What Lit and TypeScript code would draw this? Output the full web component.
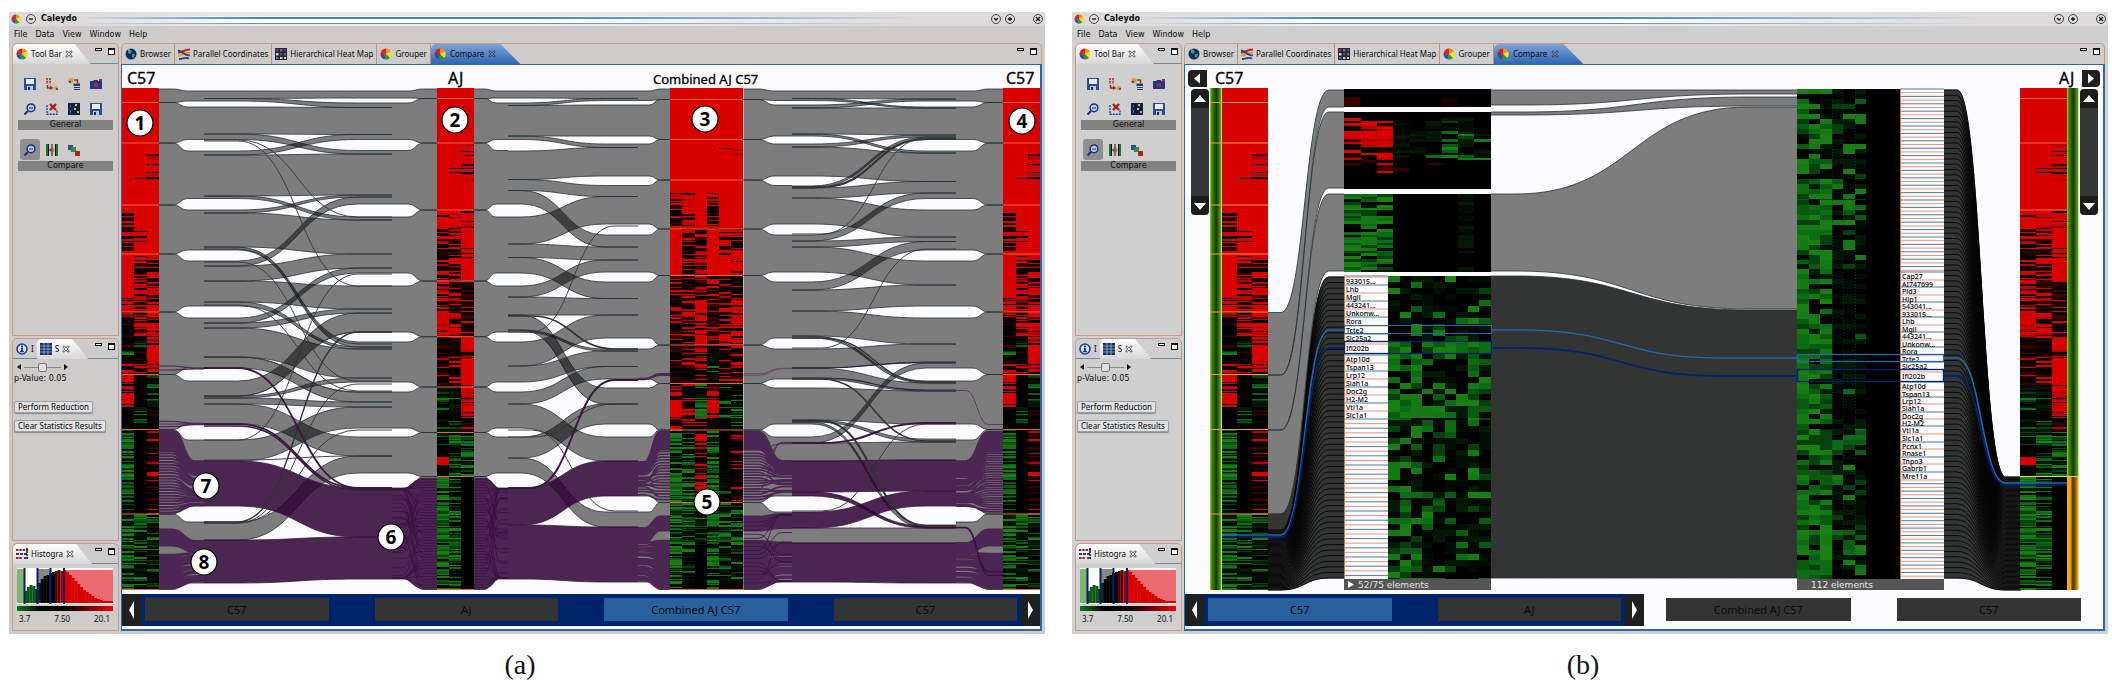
import { LitElement, html, svg, css } from "lit";
import { customElement, property } from "lit/decorators.js";
import { classMap } from "lit/directives/class-map.js";

type Span = [number, number];
type Link = [number, number, number, number, string?];
type Seg = [number, number, string[]];

/* ---------- drawing helpers ---------- */

function rng(seed: number) {
  let s = seed;
  return () => {
    s = (s * 1664525 + 1013904223) % 4294967296;
    return s / 4294967296;
  };
}

const REDS = ["#d90000", "#d90000", "#b80000", "#d90000"];
const DARK_REDS = ["#3a0000", "#160000", "#000", "#000", "#000"];
const GREENS = ["#0b5a12", "#0b6e14", "#1a7f12", "#06400c", "#157a14"];
const DARK_GREENS = ["#021a04", "#000", "#000", "#010c02"];

/* A cell code is a hue letter and the share of bright cells: "r80", "g40", "k0". */
function heat(x: number, widths: number[], segs: Seg[], seed: number, rowHeight = 1.34) {
  const rand = rng(seed);
  const paths = new Map<string, string>();
  const put = (c: string, d: string) => paths.set(c, (paths.get(c) ?? "") + d);
  const total = widths.reduce((a, b) => a + b, 0);
  const y0 = segs[0][0];
  const y1 = segs[segs.length - 1][1];
  for (const [a, b, cols] of segs) {
    let cx = x;
    cols.forEach((code, i) => {
      const w = widths[i];
      const hue = code[0];
      const share = Number(code.slice(1)) / 100;
      if (share === 1 && hue === "r") {
        put("#d90000", `M${cx} ${a}h${w}V${b}h${-w}z`);
      } else if (hue !== "k") {
        for (let y = a; y < b; y += rowHeight) {
          const h = Math.min(rowHeight, b - y);
          const bright = rand() < share;
          const set = hue === "r" ? (bright ? (share > 0.9 ? REDS.slice(0, 1) : REDS) : DARK_REDS) : bright ? GREENS : DARK_GREENS;
          const c = set[Math.floor(rand() * set.length)];
          if (c !== "#000") put(c, `M${cx} ${y.toFixed(1)}h${w}v${h.toFixed(1)}h${-w}z`);
        }
      }
      cx += w;
    });
  }
  return svg`<g shape-rendering="crispEdges">
    <rect x=${x} y=${y0} width=${total} height=${y1 - y0} fill="#000"></rect>
    ${[...paths].map(([c, d]) => svg`<path fill=${c} d=${d}></path>`)}
  </g>`;
}

function rules(x0: number, x1: number, ys: number[], colour = "#e8663a") {
  return svg`<path d=${ys.map((y) => `M${x0} ${y}H${x1}`).join("")} stroke=${colour} fill="none"></path>`;
}

function bandPath(x0: number, x1: number, l: Span, r: Span, a: number, b: number) {
  const p = x0 + (x1 - x0) * a;
  const q = x0 + (x1 - x0) * b;
  const m = (p + q) / 2;
  return {
    top: `M${x0} ${l[0]}H${p}C${m} ${l[0]} ${m} ${r[0]} ${q} ${r[0]}H${x1}`,
    fill: `M${x0} ${l[0]}H${p}C${m} ${l[0]} ${m} ${r[0]} ${q} ${r[0]}H${x1}V${r[1]}H${q}C${m} ${r[1]} ${m} ${l[1]} ${p} ${l[1]}H${x0}z`,
    bottom: `M${x0} ${l[1]}H${p}C${m} ${l[1]} ${m} ${r[1]} ${q} ${r[1]}H${x1}`,
  };
}

const FILLS: Record<string, string> = {
  grey: "rgba(0,0,0,.5)",
  purple: "rgba(43,0,49,.85)",
  dark: "#333434",
};

function band(x0: number, x1: number, l: Span, r: Span, a = 0.18, b = 0.82, kind = "grey") {
  const p = bandPath(x0, x1, l, r, a, b);
  const line = kind === "purple" ? "#3a1640" : "#25323a";
  return svg`<path d=${p.fill} fill=${FILLS[kind]}></path>
    <path d=${p.top + p.bottom} fill="none" stroke=${line} stroke-width=".8"></path>`;
}

function spans(edges: number[]): Span[] {
  const out: Span[] = [];
  for (let i = 0; i < edges.length; i += 2) out.push([edges[i], edges[i + 1]]);
  return out;
}

function columnSpans(div: number[]): Span[] {
  return div.slice(1).map((y, i) => [div[i], y] as Span);
}

/* Many thin strands between two vertical ranges; mix shuffles their order. */
function strands(x0: number, x1: number, l: Span, r: Span, n: number, mix: number, seed: number, colour = "#4d2753", width = 1.4) {
  const rand = rng(seed);
  let d = "";
  for (let i = 0; i < n; i++) {
    const t = (i + 0.5) / n;
    const u = Math.min(1, Math.max(0, t + (rand() - 0.5) * mix));
    const ya = l[0] + (l[1] - l[0]) * t;
    const yb = r[0] + (r[1] - r[0]) * u;
    const p = x0 + (x1 - x0) * 0.3;
    const q = x0 + (x1 - x0) * 0.8;
    const m = (p + q) / 2;
    d += `M${x0} ${ya.toFixed(1)}H${p.toFixed(1)}C${m.toFixed(1)} ${ya.toFixed(1)} ${m.toFixed(1)} ${yb.toFixed(1)} ${q.toFixed(1)} ${yb.toFixed(1)}H${x1}`;
  }
  return svg`<path d=${d} fill="none" stroke=${colour} stroke-width=${width}></path>`;
}

function thin(x0: number, x1: number, list: [number, number, number?, string?][]) {
  return list.map(([a, b, w, c]) => svg`<path fill="none" stroke=${c ?? "#333"} stroke-width=${w ?? 0.9}
    d=${bandPath(x0, x1, [a, a], [b, b], 0.18, 0.82).top}></path>`);
}

/* ---------- overview data ---------- */

const DIV_C57 = [89, 102.5, 143, 205, 254, 312, 374.5, 429.5, 514, 589.5];
const DIV_AJ = [89, 98.5, 143, 210, 281, 336.7, 387, 432.5, 476.5, 589.5];
const DIV_MIX = [89, 99.5, 139.5, 180, 229, 275.5, 345, 383.5, 430, 502.5, 589.5];

const EDGE_C57 = spans([91, 101, 107, 139.5, 151, 198.5, 210, 250, 261, 306, 318, 368, 381, 424, 440, 506, 522, 583]);
const EDGE_AJ = spans([91, 98, 103, 139.5, 150.5, 204, 217, 273, 286, 332, 342, 382, 392, 428, 437, 473, 488, 579]);
const EDGE_MIX = spans([91, 100.5, 105, 136, 144, 176, 185.5, 224, 235, 272, 282, 338, 349, 379, 388, 424, 437, 496, 512, 582]);

const LINKS_1: Link[] = [
  [91, 98.5, 91, 98], [98.5, 101, 103, 107.5], [107, 134, 107.5, 134.5], [134, 139.5, 150.5, 154],
  [151, 155, 134.5, 139.5], [155, 196, 154, 195], [196, 198.5, 217, 220], [210, 213, 195, 197],
  [213, 247, 220, 254], [247, 250, 342, 347], [261, 266, 197, 204], [266, 281, 254, 268],
  [281, 302, 286, 309], [302, 306, 347, 349], [318, 323, 268, 273], [323, 328, 309, 313],
  [328, 357, 349, 378], [357, 368, 392, 402], [381, 396, 313, 332], [396, 398, 378, 382],
  [398, 404, 402, 407], [404, 424, 437, 456], [440, 461, 407, 428], [522, 540, 456, 473],
  [461, 506, 488, 537, "purple"], [540, 583, 537, 579, "purple"],
];
const LINKS_2: Link[] = [
  [91, 98, 91, 98.5], [103, 105.5, 98.5, 100.5], [105.5, 136, 105, 136], [136, 139.5, 144, 147.5],
  [151, 179.5, 147.5, 176], [179.5, 190.5, 185.5, 196.5], [190.5, 204, 235, 247], [217, 244, 196.5, 224],
  [244, 257.5, 247, 260], [257.5, 273, 282, 298.5], [286, 297, 260, 272], [297, 315, 298.5, 315],
  [315, 330, 388, 404], [330, 332, 349, 351], [342, 366, 315, 338], [366, 382, 351, 366.5],
  [392, 404, 366.5, 379], [404, 428, 437, 461], [437, 458, 404, 424], [458, 473, 512, 527],
  [488, 525, 461, 496, "purple"], [525, 579, 527, 582, "purple"],
];
const LINKS_3: Link[] = [
  [91, 98.5, 91, 99], [105, 108, 99, 101], [98.5, 100.5, 107, 108], [108, 134, 108, 135], [134, 136, 151, 153],
  [144, 147, 135, 137], [147, 176, 153, 181.5], [186, 188, 137, 139.5], [188, 198, 181.5, 193],
  [198, 224, 210, 237], [235, 241, 193, 198.5], [241, 247, 237, 241.5], [247, 272, 261, 285],
  [282, 290, 241.5, 250], [290, 311, 285, 306], [311, 336, 318, 344], [336, 338, 381, 383],
  [349, 368, 344, 363], [368, 379, 383, 391], [388, 420, 391, 424], [437, 443, 363, 368],
  [420, 422, 439, 442], [422, 424, 525, 528], [443, 461, 442, 460], [528, 543, 528, 543],
  [461, 492, 460, 491, "purple"], [512, 528, 491, 506, "purple"], [492, 496, 526, 528, "purple"],
  [543, 582, 543, 583, "purple"],
];

const SEG_C57: Seg[] = [
  [88, 143, ["r100", "r100", "r100"]], [143, 153, ["r100", "r100", "r100"]], [153, 180, ["r100", "r99", "r78"]],
  [180, 212, ["r100", "r100", "r100"]], [212, 252, ["r40", "r98", "r100"]], [252, 256, ["r100", "r100", "r100"]],
  [256, 275, ["r92", "r40", "r35"]], [275, 312, ["r93", "r60", "r75"]], [312, 336, ["r12", "r50", "r80"]],
  [336, 348, ["r5", "g15", "r40"]], [348, 361, ["g10", "r20", "r97"]], [361, 375, ["r20", "r50", "r60"]],
  [375, 388, ["r45", "k0", "g35"]], [388, 407, ["r92", "k0", "g40"]], [407, 430, ["k0", "g8", "r5"]],
  [430, 514, ["g55", "k0", "r15"]], [514, 525, ["g20", "g90", "g85"]], [525, 589.5, ["g50", "g28", "g28"]],
];
const SEG_AJ: Seg[] = [
  [88, 143, ["r100", "r100", "r100"]], [143, 182, ["r100", "r98", "r78"]], [182, 210, ["r100", "r100", "r100"]],
  [210, 228, ["r98", "r85", "r60"]], [228, 275, ["r35", "r45", "r97"]], [275, 281, ["r10", "r20", "r100"]],
  [281, 337, ["r80", "r40", "r5"]], [337, 360, ["r12", "r15", "r80"]], [360, 387, ["r10", "r15", "r92"]],
  [387, 418, ["g30", "g12", "r75"]], [418, 432, ["g20", "g20", "r8"]], [432, 445, ["g10", "g90", "g85"]],
  [445, 457, ["k0", "g30", "g60"]], [457, 465, ["r95", "g35", "g50"]], [465, 476, ["k0", "g30", "g30"]],
  [476, 530, ["g92", "g45", "k0"]], [530, 550, ["g92", "g70", "k0"]], [550, 589.5, ["g85", "g40", "k0"]],
];
const SEG_MIX: Seg[] = [
  [88, 148, ["r100", "r100", "r100", "r100", "r100", "r100"]],
  [148, 158, ["r100", "r98", "r92", "r100", "r92", "r85"]],
  [158, 190, ["r100", "r100", "r100", "r100", "r100", "r100"]],
  [190, 229, ["r45", "r80", "r100", "r40", "r100", "r100"]],
  [229, 250, ["r100", "r60", "r35", "r100", "r45", "r40"]],
  [250, 275, ["r100", "r50", "r50", "r100", "r92", "r94"]],
  [275, 300, ["r55", "r35", "r50", "r60", "r20", "r25"]],
  [300, 345, ["r20", "r35", "r92", "r25", "r50", "r80"]],
  [345, 383, ["r5", "r10", "r45", "g10", "r15", "r40"]],
  [383, 400, ["r50", "r25", "g30", "r45", "g12", "g30"]],
  [400, 418, ["r92", "r35", "g80", "r85", "g25", "g40"]],
  [418, 430, ["r30", "r10", "r25", "k0", "k0", "g30"]],
  [430, 470, ["g65", "g40", "r35", "g60", "k0", "r20"]],
  [470, 502, ["g85", "g60", "r30", "g70", "g5", "r15"]],
  [502, 545, ["g70", "g50", "g35", "g65", "g50", "g50"]],
  [545, 589.5, ["g75", "g25", "k0", "g50", "g12", "g20"]],
];

const MARKS: [number, number, number][] = [
  [1, 140, 123], [2, 455, 120], [3, 705, 119], [4, 1022, 121],
  [5, 707, 502], [6, 391, 537], [7, 206, 486], [8, 204, 562],
];

function fans(xc: number, xe: number, col: Span[], edge: Span[]) {
  const flip = xe < xc;
  return col.map((c, i) => flip
    ? band(xe, xc, edge[i], c, 0.35, 0.7)
    : band(xc, xe, c, edge[i], 0.3, 0.65));
}

function overview() {
  const c57 = columnSpans(DIV_C57);
  const aj = columnSpans(DIV_AJ);
  const mix = columnSpans(DIV_MIX);
  return svg`
    <g>
      ${fans(159, 204, c57, EDGE_C57)}
      ${LINKS_1.map((l) => band(204, 392, [l[0], l[1]], [l[2], l[3]], 0.18, 0.82, l[4]))}
      ${fans(437, 392, aj, EDGE_AJ)}
      ${thin(204, 392, [[140, 217], [141, 286], [249, 344], [262, 381], [440, 274], [522, 332, 1.4], [523, 384], [523, 430],
        [396, 332], [357, 392], [305, 391], [460, 456], [368, 488, 1.8, "#3a1640"], [424, 488, 2, "#3a1640"], [426, 490, 1.4, "#3a1640"]])}
      ${strands(159, 204, [364, 372], [368, 369], 2, 0, 4, "#4d2753", 1.2)}
      ${strands(159, 204, [420, 428], [423, 425], 3, 0, 5, "#4d2753", 1.2)}
      ${strands(159, 204, [430, 452], [461, 475], 16, 0.1, 6, "#4d2753", 1.8)}
      ${strands(159, 204, [452, 514], [475, 506], 22, 0.1, 7, "#4d2753", 2)}
      ${strands(159, 204, [529, 546], [541, 553], 16, 0.1, 8, "#4d2753", 2)}
      ${strands(159, 204, [554, 589], [553, 583], 26, 0.1, 9, "#4d2753", 2)}
      ${strands(437, 392, [478, 589], [489, 578], 64, 0, 10, "#4d2753", 2.2)}
      ${strands(437, 392, [478, 589], [489, 578], 40, 1.5, 11, "#3a1040", 0.8)}
    </g>
    <g>
      ${fans(474, 508, aj, EDGE_AJ)}
      ${LINKS_2.map((l) => band(508, 638, [l[0], l[1]], [l[2], l[3]], 0.1, 0.75, l[4]))}
      ${fans(670, 638, mix, EDGE_MIX)}
      ${thin(508, 638, [[332, 226], [316, 349, 1.6], [430, 511], [488, 380, 2, "#3a1640"], [437, 404]])}
      ${strands(474, 508, [478, 589], [489, 578], 64, 0, 12, "#4d2753", 2.2)}
      ${strands(474, 508, [478, 589], [489, 578], 40, 1.5, 13, "#3a1040", 0.8)}
      ${strands(670, 638, [431, 450], [462, 473], 14, 0.2, 14, "#4d2753", 2)}
      ${strands(670, 638, [450, 501], [470, 495], 18, 0.5, 15, "#4d2753", 1.6)}
      ${strands(670, 638, [516, 531], [528, 543], 16, 0.1, 16, "#4d2753", 2)}
      ${strands(670, 638, [540, 589], [543, 581], 36, 0.1, 17, "#4d2753", 2)}
      ${strands(670, 638, [373, 376], [378, 380], 2, 0, 18)}
    </g>
    <g>
      ${fans(743.5, 792, mix, EDGE_MIX)}
      ${LINKS_3.map((l) => band(792, 956, [l[0], l[1]], [l[2], l[3]], 0.12, 0.82, l[4]))}
      ${fans(1003, 956, c57, EDGE_C57)}
      ${thin(792, 956, [[187, 139, 2], [234, 138], [348, 249], [338, 382, 1.6], [379, 441, 1.6], [421, 526, 2], [511, 424],
        [443, 423, 2, "#3a1640"], [378, 390, 1.2, "#3a1640"], [368, 362, 1.2, "#3a1640"]])}
      ${strands(743.5, 792, [373, 376], [368, 369], 2, 0, 19, "#6a4a70", 1)}
      ${strands(743.5, 792, [431, 450], [461, 473], 14, 0.2, 20, "#4d2753", 2)}
      ${strands(743.5, 792, [452, 501], [470, 492], 18, 0.5, 21, "#4d2753", 1.6)}
      ${strands(743.5, 792, [516, 531], [514, 528], 14, 0.1, 22, "#4d2753", 2)}
      ${strands(743.5, 792, [540, 589], [543, 581], 36, 0.1, 23, "#4d2753", 2)}
      ${strands(743.5, 792, [500, 440], [442, 444], 3, 0, 30, "#4d2753", 1)}
      ${strands(743.5, 792, [520, 585], [515, 581], 16, 1.2, 31, "#3a1040", 0.8)}
      ${strands(1003, 956, [431, 452], [461, 480], 14, 0.1, 24, "#4d2753", 2)}
      ${strands(1003, 956, [452, 513], [480, 506], 26, 0.2, 25, "#4d2753", 1.8)}
      ${strands(1003, 956, [529, 546], [543, 555], 14, 0.1, 26, "#4d2753", 2)}
      ${strands(1003, 956, [553, 589], [553, 583], 26, 0.1, 27, "#4d2753", 2)}
      ${strands(1003, 956, [570, 577], [527, 528], 2, 0, 28, "#3a1040", 1.2)}
      ${strands(1003, 956, [424, 425], [390, 391], 1, 0, 29, "#5a3a60", 1)}
    </g>
    ${heat(122, [12, 13, 12], SEG_C57, 3)}${rules(122, 159, DIV_C57.slice(1))}
    ${heat(437, [12, 12, 13], SEG_AJ, 7)}${rules(437, 474, DIV_AJ.slice(1))}
    ${heat(670, [12, 13, 12, 12, 12, 12], SEG_MIX, 11)}${rules(670, 743, DIV_MIX.slice(1))}
    ${heat(1003, [13, 12, 12], SEG_C57, 3)}${rules(1003, 1040, DIV_C57.slice(1))}
    <g class="heading">
      <text x="127" y="84">C57</text>
      <text x="448" y="84">AJ</text>
      <text class="small" x="653" y="84">Combined AJ C57</text>
      <text x="1006" y="84">C57</text>
    </g>
    ${MARKS.map(([n, x, y]) => svg`<circle cx=${x} cy=${y} r="13" fill="#fff" stroke="#000" stroke-width="1.2"></circle>
      <text class="mark" x=${x} y=${y + 7}>${n}</text>`)}
  `;
}

/* ---------- detail data ---------- */

const LEFT_LABELS: [string, number][] = [
  ["933015...", 281], ["Lhb", 289], ["Mgll", 297], ["443241...", 305], ["Unkonw...", 313], ["Rora", 321],
  ["Tcte2", 330], ["Slc25a2", 338], ["Ifi202b", 348], ["Atp10d", 359], ["Tspan13", 367], ["Lrp12", 375],
  ["Siah1a", 383], ["Doc2g", 391], ["H2-M2", 399], ["Vti1a", 407], ["Slc1a1", 415],
];
const RIGHT_LABELS: [string, number][] = [
  ["Cap27", 276], ["AI747699", 284], ["Pld3", 291], ["Hip1", 299], ["543041...", 306], ["933015...", 314],
  ["Lhb", 321], ["Mgll", 329], ["443241...", 336], ["Unkonw...", 344], ["Rora", 351], ["Tcte2", 359],
  ["Slc25a2", 366], ["Ifi202b", 376], ["Atp10d", 386], ["Tspan13", 394], ["Lrp12", 401], ["Siah1a", 408],
  ["Doc2g", 416], ["H2-M2", 423], ["Vti1a", 430], ["Slc1a1", 438], ["Pcnx1", 446], ["Rnase1", 453],
  ["Tnpo3", 461], ["Gabrb1", 468], ["Mre11a", 476],
];

function labelList(x: number, list: [string, number][], top: number, bottom: number, pitch: number) {
  const first = list[0][1] - 4;
  const last = list[list.length - 1][1] + 4;
  let blue = "";
  let warm = "";
  let i = 0;
  const put = (y: number) => {
    if (i++ % 2) warm += `M${x} ${y.toFixed(1)}h44`;
    else blue += `M${x} ${y.toFixed(1)}h44`;
  };
  for (let y = top; y < first; y += pitch) put(y);
  for (const [, y] of list) put(y - 4);
  for (let y = last; y < bottom; y += pitch) put(y);
  return svg`<rect x=${x} y=${top} width="44" height=${bottom - top} fill="#fbfafc"></rect>
    <path d=${blue} stroke="#4f7f95"></path><path d=${warm} stroke="#e39a80"></path>
    <path d=${`M${x + 0.5} ${top}V${bottom}`} stroke="#e0704a"></path>
    ${list.map(([t, y]) => svg`<text class="gene" x=${x + 2} y=${y + 3}>${t}</text>`)}`;
}

function fanLines(x0: number, x1: number, l: Span, r: Span, n: number, a: number, b: number) {
  let d = "";
  for (let i = 0; i <= n; i++) {
    const ya = l[0] + ((l[1] - l[0]) * i) / n;
    const yb = r[0] + ((r[1] - r[0]) * i) / n;
    d += bandPath(x0, x1, [ya, ya], [yb, yb], a, b).top;
  }
  return svg`<path d=${d} fill="none" stroke="#050505" stroke-width=".9"></path>`;
}

function curve(x0: number, x1: number, ya: number, yb: number, a: number, b: number, c: string, w: number) {
  return svg`<path d=${bandPath(x0, x1, [ya, ya], [yb, yb], a, b).top} fill="none" stroke=${c} stroke-width=${w}></path>`;
}

function strip(x: number, y0: number, y1: number, fill: string) {
  return svg`<rect x=${x} y=${y0} width="11.5" height=${y1 - y0} fill=${`url(#${fill})`}></rect>`;
}

function scroller(x: number) {
  const m = x + 9;
  return svg`<rect x=${x} y="89" width="18" height="126" rx="4" fill="#1b1c1c"></rect>
    <rect x=${x} y="108" width="18" height="88" fill="#353636"></rect>
    <path fill="#fff" d=${`M${m} 95l6 7h-12zM${m} 210l6 -7h-12z`}></path>`;
}

function detail() {
  const A = 0.17;
  const B = 0.8;
  const LIGHT = "#2a66a8";
  const NAVY = "#00246c";
  return svg`
    <defs>
      <linearGradient id="green"><stop offset="0" stop-color="#9be01a"></stop><stop offset=".15" stop-color="#3f8a0c"></stop>
        <stop offset=".55" stop-color="#15380a"></stop><stop offset=".9" stop-color="#4b9a10"></stop><stop offset="1" stop-color="#8fc020"></stop></linearGradient>
      <linearGradient id="amber"><stop offset="0" stop-color="#ffb000"></stop><stop offset=".3" stop-color="#f0a010"></stop>
        <stop offset=".5" stop-color="#4a3506"></stop><stop offset=".7" stop-color="#7a5808"></stop><stop offset="1" stop-color="#ffb800"></stop></linearGradient>
    </defs>
    ${band(1268, 1344, [312.5, 375], [90, 107], A, B)}
    ${band(1268, 1344, [375, 430], [112, 188], A, B)}
    ${band(1268, 1344, [430, 514], [194, 271], A, B)}
    ${band(1268, 1344, [514, 590], [277, 578], A, B, "dark")}
    ${fanLines(1268, 1344, [530, 590], [277, 578], 54, A, B)}
    ${curve(1268, 1344, 535, 330, A, B, LIGHT, 1.6)}
    ${curve(1268, 1344, 537, 348, A, B, NAVY, 1.8)}

    ${band(1491, 1797, [90, 105], [90, 94], 0.1, 0.85)}
    ${band(1491, 1797, [112, 115], [97, 106], 0.1, 0.85)}
    ${band(1491, 1797, [194, 271], [107, 309], 0.08, 0.84)}
    ${band(1491, 1797, [276, 578], [310, 578], 0.08, 0.84, "dark")}
    ${curve(1491, 1797, 330, 358, 0.1, 0.75, LIGHT, 1.4)}
    ${curve(1491, 1797, 348, 376, 0.1, 0.75, NAVY, 1.8)}

    ${band(1944, 2021, [90, 578], [477, 590], A, B, "dark")}
    ${fanLines(1944, 2021, [90, 578], [477, 590], 92, A, B)}
    ${curve(1944, 2021, 358, 483, A, B, LIGHT, 1.6)}
    ${curve(1944, 2021, 376, 485, A, B, NAVY, 1.8)}

    ${heat(1222, [15, 15, 16], SEG_C57, 3)}
    ${strip(1210, 88, 590, "green")}
    ${rules(1210, 1268, DIV_C57.slice(1, -1), "#f0a050")}
    ${heat(2020, [16, 16, 15], SEG_AJ, 7)}
    ${strip(2067, 88, 476, "green")}${strip(2067, 476, 590, "amber")}
    ${rules(2020, 2067, DIV_AJ.slice(1, 4), "#f07040")}
    ${rules(2020, 2078, [476.5], "#f0d060")}
    <path d="M1222 535H1268M2020 483H2067" stroke=${LIGHT} stroke-width="1.6"></path>
    <path d="M1222 537H1268M2020 485H2067" stroke=${NAVY} stroke-width="1.6"></path>

    ${heat(1344, [16, 16, 17, 16, 16, 17, 16, 17, 16], [[89, 97, Array(9).fill("k0")], [97, 107, ["r0", "k0", "k0", "k0", "k0", "k0", "r5", "r10", "r5"]]], 21, 9)}
    ${heat(1344, [17, 16, 16, 16, 17, 16, 16, 16, 17], [
      [112, 118, Array(9).fill("k0")],
      [118, 131, ["r40", "r50", "r50", "g15", "k0", "g5", "g5", "g10", "k0"]],
      [131, 139, ["r99", "r99", "r99", "g20", "g20", "g5", "g60", "g40", "g30"]],
      [139, 160, ["r40", "r60", "r50", "g5", "g5", "g2", "g30", "g30", "g40"]],
      [160, 173, ["r10", "r25", "r25", "r5", "k0", "r5", "k0", "k0", "k0"]],
      [173, 189, Array(9).fill("k0")]], 22, 2.7)}
    ${heat(1344, [17, 16, 16, 16, 17, 16, 16, 16, 17], [[194, 272, ["g65", "g70", "g70", "k0", "k0", "k0", "k0", "g2", "k0"]]], 23, 2.7)}
    ${heat(1388, [12, 11, 11, 11, 12, 11, 12, 11, 12], [
      [276, 341, ["g30", "g12", "g30", "g8", "g8", "g12", "g20", "g10", "g20"]],
      [341, 353, ["g100", "g100", "g0", "g100", "g100", "g100", "g100", "g100", "g100"]],
      [353, 394, ["g40", "g40", "g80", "g25", "g20", "g25", "g20", "g90", "g25"]],
      [394, 420, ["g100", "g95", "g70", "g50", "g60", "g50", "g40", "g60", "g90"]],
      [420, 500, ["g45", "g45", "g50", "g20", "g30", "g15", "g20", "g30", "g25"]],
      [500, 579, ["g60", "g70", "g50", "g25", "g30", "g12", "g20", "g15", "g12"]]], 28, 6)}
    ${labelList(1344, LEFT_LABELS, 276, 579, 4.6)}
    ${heat(1797, [12, 11, 12, 11, 12, 11, 11, 12, 11], [
      [89, 200, ["g80", "g60", "g65", "g12", "g20", "g25", "k0", "k0", "k0"]],
      [200, 264, ["g95", "g85", "g75", "g30", "g50", "g40", "k0", "k0", "k0"]],
      [264, 430, ["g92", "g75", "g75", "g8", "g5", "g5", "k0", "k0", "k0"]],
      [430, 450, ["g99", "g95", "g95", "g90", "g40", "g95", "k0", "k0", "k0"]],
      [450, 579, ["g75", "g85", "g80", "g25", "g35", "g40", "k0", "k0", "k0"]]], 25, 5)}
    <path d="M1832.5 89V579M1843.5 89V579M1855.5 89V579" stroke="#14366a" stroke-width=".7" stroke-dasharray="1 2"></path>
    ${labelList(1900, RIGHT_LABELS, 89, 579, 3.7)}
    <g fill="none">
      <rect x="1344.500" y="325.500" width="147" height="8" stroke=${LIGHT}></rect>
      <rect x="1344.500" y="341.500" width="147" height="12" stroke=${NAVY} stroke-width="1.3"></rect>
      <rect x="1797.500" y="354.500" width="146" height="7" stroke=${LIGHT} stroke-width="1.3"></rect>
      <rect x="1797.500" y="369.500" width="146" height="12" stroke=${NAVY} stroke-width="1.3"></rect>
    </g>
    <rect x="1344" y="579" width="147" height="11" fill="#555"></rect>
    <path d="M1348 581v7l6 -3.500z" fill="#fff"></path>
    <text class="count" x="1358" y="588">52/75 elements</text>
    <rect x="1797" y="579" width="147" height="11" fill="#555"></rect>
    <text class="count" x="1811" y="588">112 elements</text>

    <path d="M1192 70h15v17h-15a4 4 0 0 1 -4 -4v-9a4 4 0 0 1 4 -4z" fill="#1e1f1f"></path>
    <path d="M1194 78.500l6 -5v10z" fill="#fff"></path>
    <path d="M2082 70h14a4 4 0 0 1 4 4v9a4 4 0 0 1 -4 4h-14z" fill="#1e1f1f"></path>
    <path d="M2094 78.500l-6 -5v10z" fill="#fff"></path>
    ${scroller(1191)}${scroller(2080)}
    <g class="heading"><text x="1215" y="84">C57</text><text x="2059" y="84">AJ</text></g>
  `;
}

/* ---------- icons ---------- */

const icons: Record<string, unknown> = {
  logo: svg`<path fill="#e02010" d="M6 6L1 4A5.500 5.500 0 0 1 6 .5z"></path><path fill="#f09010" d="M6 6V.5A5.500 5.500 0 0 1 11 3.500z"></path>
    <path fill="#f0e020" d="M6 6l5 -2.500A5.500 5.500 0 0 1 10 10z"></path><path fill="#2a9a20" d="M6 6l4 4a5.500 5.500 0 0 1 -5.500 1.300z"></path>
    <path fill="#2050b0" d="M6 6l-1.500 5.300A5.500 5.500 0 0 1 .6 7z"></path><path fill="#c01020" d="M6 6L.6 7A5.500 5.500 0 0 1 1 4z"></path>`,
  globe: svg`<circle cx="6" cy="6" r="5.500" fill="#0c2a6a"></circle><path fill="#3a9a6a" d="M3 2l3 0 1 2-2 2-2-1zM7 6l3 0-1 4-2-1z"></path><path fill="#9cc4ea" d="M3 1.500l2-.5-2 2z"></path>`,
  parallel: svg`<path fill="none" stroke="#e0a020" stroke-width="2" d="M0 7.500C4 7.500 6 4.500 12 4.500"></path><path fill="none" stroke="#c02020" stroke-width="2" d="M0 4.500C4 4.500 6 1.500 12 1.500"></path>
    <path fill="none" stroke="#204080" stroke-width="1.800" d="M0 2.500C4 2.500 7 9 12 7"></path><path fill="none" stroke="#204080" stroke-width="1.800" d="M1 11C5 11 7 8.500 11 10.500"></path>`,
  heatmap: svg`<path fill="#10206a" d="M0 0h12v12H0z"></path><path fill="#d02020" d="M1 1h2.500v2.500H1zM5 5h2.500v2.500H5zM9 1h2v2.500H9z"></path><path fill="#30a030" d="M5 1h2.500v2.500H5zM1 9h2.500v2H1zM9 5h2v2.500H9z"></path><path fill="#f0e040" d="M1 5h2.500v2.500H1zM5 9h2.500v2H5zM9 9h2v2H9z"></path>`,
  save: svg`<path fill="#2c4c94" d="M0 0h12v12H0z"></path><path fill="#e8eef8" d="M2 1h8v5H2z"></path><path fill="#b8c8e0" d="M3 8h6v4H3z"></path><path fill="#182c60" d="M4 9h2v3H4z"></path>`,
  tree: svg`<path fill="none" stroke="#b02818" stroke-width="1.600" stroke-dasharray="2 .8" d="M1 0v6M4 0v6"></path><path fill="none" stroke="#902818" stroke-width="1.500" d="M1.500 7v3H5"></path><path fill="#b02818" d="M4 7.500l3.500 2.500L4 12z"></path><circle cx="10" cy="10" r="2.200" fill="#e8a020"></circle><path fill="#2050b0" d="M10 10h2.200A2.200 2.200 0 0 1 10 12.200z"></path>`,
  exporter: svg`<circle cx="3" cy="2.500" r="2.700" fill="#e8a020"></circle><path fill="#2050b0" d="M3 2.500L.3 3A2.700 2.700 0 0 0 3 5.200z"></path><path fill="none" stroke="#a03010" stroke-width="1.500" d="M6 2h3.500v3"></path><path fill="#203a70" d="M5.500 5.500H12V8H5.500zM6 9h6v1H6zM6 11h6v1H6z"></path>`,
  camera: svg`<path fill="#1c3a8c" d="M0 3h3l1-1h4v1h4v8H0z"></path><circle cx="6" cy="7" r="2.300" fill="#c02030"></circle><path fill="#c02030" d="M9 1h3v2H9z"></path>`,
  lens: svg`<circle cx="7" cy="4.800" r="3.900" fill="#b9cdea" stroke="#1c2f78" stroke-width="1.500"></circle><path d="M4 8l-3.500 3.500" stroke="#1c2f78" stroke-width="2"></path><path d="M5 5h4" stroke="#1c2f78"></path>`,
  reset: svg`<path fill="none" stroke="#2040a0" stroke-width="1.400" stroke-dasharray="2 1" d="M1 2v9.300h10V7"></path><path stroke="#b01818" stroke-width="2.400" d="M4 1l6 6M10 1l-6 6"></path>`,
  matrix: svg`<path fill="#0c2048" d="M0 0h12v12H0z"></path><path fill="#e0c030" d="M7 1h2v2H7zM6 5h2v2H6zM9 8h2v2H9z"></path><path fill="#3080c0" d="M2 2h1v2H2zM2 7h1v3H2z"></path>`,
  align: svg`<path fill="#207030" d="M0 0h2v12H0zM10 0h2v12h-2z"></path><path fill="#101010" d="M2 0h1v12H2zM9 0h1v12H9zM5.500 0h1v12h-1z"></path><path fill="#c02020" d="M3 6l2-2v4zM9 6l-2-2v4zM3 5.500h6v1H3z"></path>`,
  stack: svg`<path fill="#2848a0" d="M0 1h5v5H0z"></path><path fill="#30903a" d="M3 3h5v5H3z"></path><path fill="#b02020" d="M7 7h5v5H7z"></path>`,
  info: svg`<circle cx="6" cy="6" r="5" fill="#dde6f4" stroke="#1c3a98" stroke-width="1.600"></circle><path fill="#1c3a98" d="M5 2.500h2v2H5zM5 5h2v4H5zM4 8h4v1.300H4z"></path>`,
  grid: svg`<path fill="#10306a" d="M0 0h12v12H0z"></path><path stroke="#b8c4d8" stroke-width=".7" d="M4 0v12M8 0v12M0 3h12M0 6h12M0 9h12"></path>`,
  histo: svg`<path stroke="#b02020" stroke-width="1.800" stroke-dasharray="2.500 .8" d="M0 2h12M0 10h6"></path><path stroke="#203a90" stroke-width="1.800" stroke-dasharray="3 1" d="M0 6h12"></path><path stroke="#101010" stroke-width="1.500" d="M8 10h4M11 0v12" stroke-dasharray="2 1"></path>`,
  cross: svg`<path fill="none" stroke="#333" d="M1.500 1.500h2l2.500 3 2.500-3h2v2l-3 2.500 3 2.500v2h-2l-2.500-3-2.500 3h-2v-2l3-2.500-3-2.500z"></path>`,
};

function icon(name: string, size = "") {
  return html`<svg class="icon ${size}" viewBox="0 0 12 12" aria-hidden="true">${icons[name]}</svg>`;
}

/* ---------- window ---------- */

@customElement("caleydo-window")
export class CaleydoWindow extends LitElement {
  @property({ reflect: true }) mode: "overview" | "detail" = "overview";

  static styles = css`
    :host { display: block; background: #cecbcb; font: 8px/12px "Noto Sans", "DejaVu Sans", sans-serif; color: #0a0a0a; }
    :host([mode="detail"]) { background: #cfcfcf; }
    button { font: inherit; color: inherit; border: 0; padding: 0; background: none; cursor: pointer; }
    .icon { width: 12px; height: 12px; flex: none; display: block; }
    .icon.mini { width: 8px; height: 8px; }
    .title { display: flex; align-items: center; height: 14px; padding: 0 2px; gap: 5px; background: #dcdadb; }
    .title h1 { margin: 0; font: 700 8px/12px "DejaVu Sans", sans-serif; }
    .title .icon { width: 10px; height: 10px; }
    .stripes { flex: 1; align-self: stretch; background:
      linear-gradient(90deg, #dcdadb 0, transparent 20%, transparent 50%, #dcdadb 92%),
      linear-gradient(#e8e8ea 4px, #fff 4px, #fff 5px, #3b84c4 5px, #3b84c4 7px, #fff 7px, #fff 11px, #5a93c0 11px, #5a93c0 12px, #eee 12px); }
    .round { width: 10px; height: 10px; box-sizing: border-box; border: 1px solid #444; border-radius: 50%; display: grid; place-items: center; }
    .round svg { width: 6px; height: 6px; }
    .spread { margin-left: 14px; }
    .controls { display: flex; gap: 4px; }
    .menu { display: flex; gap: 8px; padding: 0 5px; height: 17px; align-items: center; }
    .menu button { font-family: "DejaVu Sans", sans-serif; }
    .work { display: flex; gap: 2px; padding: 0 3px 3px; }
    aside { width: 107px; flex: none; display: flex; flex-direction: column; gap: 2px; }
    .pane { box-sizing: border-box; border: 1px solid #c99a8a; border-radius: 5px 5px 0 0; }
    .tools { flex: 1; }
    .stats { height: 203px; }
    .histogram { height: 88px; }
    .head { display: flex; align-items: flex-start; height: 20px; border-bottom: 1px solid #6d8a96; box-sizing: border-box; }
    .tab { display: flex; align-items: center; gap: 3px; height: 20px; padding: 0 3px; white-space: nowrap; }
    .tab.on { background: linear-gradient(#fff, #d8d6d6); padding-right: 18px; clip-path: polygon(0 0, calc(100% - 16px) 0, 100% 100%, 0 100%); border-radius: 5px 0 0 0; }
    .min { display: flex; gap: 6px; margin: 4px 3px 0 auto; }
    .min i { width: 7px; height: 3px; border: 1px solid #111; box-sizing: border-box; background: #fff; }
    .min i + i { height: 7px; border-top-width: 2px; }
    .grid { display: grid; grid-template-columns: repeat(4, 22px); row-gap: 4px; padding: 9px 6px 0; justify-items: center; }
    .grid + .caption { margin-top: 1px; }
    .grid button { width: 20px; height: 21px; display: grid; place-items: center; }
    .grid button.held { background: #8f8f8f; border-radius: 3px; }
    .caption { margin: 0 5px; height: 10px; font: 8px/10px "DejaVu Sans", sans-serif; text-align: center; background: #828282; }
    .stat-body { display: flex; flex-direction: column; align-items: flex-start; padding: 2px 1px 0; }
    .slide { display: flex; align-items: center; gap: 3px; height: 12px; padding-left: 3px; }
    .slide i { border: 3px solid transparent; border-right: 4px solid #111; border-left: 0; }
    .slide i:last-child { border-right: 0; border-left: 4px solid #111; }
    .range { appearance: none; width: 37px; height: 10px; margin: 0; background: linear-gradient(#888, #888) 0 5px / 100% 1px no-repeat; }
    .range::-webkit-slider-thumb { appearance: none; width: 9px; height: 9px; background: #e0dede; border: 1px solid #777; border-radius: 2px; }
    .stat-body label { font-family: "DejaVu Sans", sans-serif; }
    .push { margin-top: 7px; height: 12px; padding: 0 3px; border: 1px solid #8fa2aa; border-radius: 2px; background: #e2e0e0; line-height: 10px; box-shadow: 0 1px 1px #888; box-sizing: border-box; }
    label + .push { margin-top: 16px; }
    .hist { display: block; width: 96px; margin: 4px 4px 0; height: 44px; }
    .scale { display: flex; justify-content: space-between; padding: 1px 8px 0 6px; }
    .main { flex: 1; min-width: 0; }
    .tabs { display: flex; height: 21px; box-sizing: border-box; border: 1px solid #c99a8a; border-bottom: 0; border-radius: 5px 5px 0 0; }
    .tabs .tab { border-right: 1px solid #b98f82; }
    .tabs .tab.on { background: linear-gradient(#7fa4d6, #2f66b4); border: 0; gap: 4px; padding-right: 24px; clip-path: polygon(0 0, calc(100% - 20px) 0, 100% 100%, 0 100%); }
    .tabs .min { margin-right: 4px; }
    .content { border: solid #2f66ae; border-width: 1px 2px 2px 1px; background: #fcfbfd; padding-bottom: 3px; }
    .view { display: block; width: 100%; height: auto; }
    .nav { display: flex; height: 32px; }
    .group { display: flex; flex: 1 1 50%; background: #00246c; }
    .boxes { display: flex; flex: 1; gap: 46px; padding: 4px; }
    .rest { display: flex; flex: 1 1 50%; box-sizing: border-box; gap: 46px; padding: 4px 22px; }
    .box { flex: 1; height: 23px; background: #333434; font-size: 11px; color: #0a0a0a; }
    .box.sel { background: #29619f; }
    .arrow { width: 19px; background: #1e1f1f; border-radius: 5px 0 0 5px; display: grid; place-items: center; }
    .arrow.next { border-radius: 0 5px 5px 0; }
    .arrow svg { width: 7px; height: 18px; }
    .heading { font: 16px "Noto Sans", sans-serif; stroke: #000; stroke-width: .3; }
    .heading .small { font-size: 13px; }
    .mark { font: 700 19px "Noto Sans", sans-serif; text-anchor: middle; }
    .gene { font: 500 7px "Noto Sans", sans-serif; }
    .count { font: 9px "DejaVu Sans", sans-serif; fill: #e8e8e8; }
  `;

  private minMax() {
    return html`<span class="min"><i></i><i></i></span>`;
  }

  private round(d: string, label: string, extra = "") {
    return html`<button class="round ${extra}" aria-label=${label}><svg viewBox="0 0 6 6"><path d=${d} fill="none" stroke="#111" stroke-width="1.300"></path></svg></button>`;
  }

  private tool(name: string, label: string, held = false) {
    return html`<button class=${classMap({ held })} aria-label=${label}>${icon(name)}</button>`;
  }

  private box(text: string, sel = false) {
    return html`<button class=${classMap({ box: true, sel })}>${text}</button>`;
  }

  private arrow(next: boolean) {
    return html`<button class=${classMap({ arrow: true, next })} aria-label=${next ? "Next" : "Previous"}>
      <svg viewBox="0 0 7 18"><path fill="#fff" d=${next ? "M1 0L6 9 1 18z" : "M6 0L1 9l5 9z"}></path></svg></button>`;
  }

  private histogram() {
    const bars = [12, 16, 18, 17, 14, 20, 24, 27, 28, 30, 31, 32, 33, 32, 33, 31, 28, 25, 22, 19, 16, 13, 11, 9, 7, 5, 4, 3, 2, 2, 2, 2];
    const colour = (i: number) => (i < 4 ? "#0a5c10" : i < 6 ? "#062c08" : i < 11 ? "#000" : i < 13 ? "#5a0000" : i < 14 ? "#a00" : "#d90000");
    return html`<svg class="hist" viewBox="0 0 96 44" role="img" aria-label="Histogram">
      <defs><linearGradient id="ramp"><stop offset="0" stop-color="#0a7a14"></stop><stop offset=".25" stop-color="#000"></stop>
        <stop offset=".5" stop-color="#000"></stop><stop offset="1" stop-color="#f00000"></stop></linearGradient></defs>
      <rect width="96" height="36" fill="#fff"></rect>
      <rect y="1" width="7" height="34" fill="#7fb56c"></rect><rect x="20" y="1" width="13" height="34" fill="#888"></rect>
      <rect x="47" y="2" width="49" height="33" fill="#ea6a6e"></rect>
      ${bars.map((h, i) => svg`<rect x=${7 + i * 2.8} y=${35 - h} width="3" height=${h} fill=${colour(i)}></rect>`)}
      <path d="M7.500 0v36M20.500 0v36M33.500 0v36M47 0v36" stroke="#0c1c70" stroke-width="2"></path>
      <rect y="38" width="96" height="5" fill="url(#ramp)"></rect></svg>`;
  }

  private nav() {
    return this.mode === "overview"
      ? html`<nav class="nav"><div class="group">${this.arrow(false)}<div class="boxes">
          ${this.box("C57")}${this.box("AJ")}${this.box("Combined AJ C57", true)}${this.box("C57")}</div>${this.arrow(true)}</div></nav>`
      : html`<nav class="nav"><div class="group">${this.arrow(false)}<div class="boxes">
          ${this.box("C57", true)}${this.box("AJ")}</div>${this.arrow(true)}</div>
          <div class="rest">${this.box("Combined AJ C57")}${this.box("C57")}</div></nav>`;
  }

  render() {
    const over = this.mode === "overview";
    return html`
      <header class="title">
        ${icon("logo")}${this.round("M1 3h4", "Window menu")}
        <h1>Caleydo</h1><span class="stripes"></span>
        <span class="controls">${this.round("M1 2l2 2 2-2", "Minimize")}${this.round("M3 1v4M1 3h4", "Maximize")}${this.round("M1 1l4 4M5 1L1 5", "Close", "spread")}</span>
      </header>
      <nav class="menu">${["File", "Data", "View", "Window", "Help"].map((m) => html`<button>${m}</button>`)}</nav>
      <div class="work">
        <aside>
          <section class="pane tools">
            <div class="head"><span class="tab on">${icon("logo")}Tool Bar ${icon("cross", "mini")}</span>${this.minMax()}</div>
            <div class="grid">
              ${this.tool("save", "Save")}${this.tool("tree", "Load")}${this.tool("exporter", "Export")}${this.tool("camera", "Snapshot")}
              ${this.tool("lens", "Search")}${this.tool("reset", "Clear")}${this.tool("matrix", "Matrix")}${this.tool("save", "Save view")}
            </div>
            <div class="caption">General</div>
            <div class="grid">${this.tool("lens", "Detail", true)}${this.tool("align", "Align")}${this.tool("stack", "Stack")}</div>
            <div class="caption">Compare</div>
          </section>
          <section class="pane stats">
            <div class="head"><span class="tab">${icon("info")} I</span><span class="tab on">${icon("grid")} S ${icon("cross", "mini")}</span>${this.minMax()}</div>
            <div class="stat-body">
              <span class="slide"><i></i><input class="range" id="p" type="range" min="0" max="100" value="50" /><i></i></span>
              <label for="p">p-Value: 0.05</label>
              <button class="push">Perform Reduction</button>
              <button class="push">Clear Statistics Results</button>
            </div>
          </section>
          <section class="pane histogram">
            <div class="head"><span class="tab on">${icon("histo")} Histogra ${icon("cross", "mini")}</span>${this.minMax()}</div>
            ${this.histogram()}
            <div class="scale"><span>3.7</span><span>7.50</span><span>20.1</span></div>
          </section>
        </aside>
        <section class="main">
          <div class="tabs">
            <button class="tab">${icon("globe")}Browser</button>
            <button class="tab">${icon("parallel")}Parallel Coordinates</button>
            <button class="tab">${icon("heatmap")}Hierarchical Heat Map</button>
            <button class="tab">${icon("logo")}Grouper</button>
            <button class="tab on">${icon("logo")}Compare ${icon("cross", "mini")}</button>
            ${this.minMax()}
          </div>
          <div class="content">
            <svg class="view" viewBox=${over ? "122 65 918 529" : "1185 65 918 529"}>${over ? overview() : detail()}</svg>
            ${this.nav()}
          </div>
        </section>
      </div>
    `;
  }
}

@customElement("app-root")
export class AppRoot extends LitElement {
  static styles = css`
    :host { display: block; background: #fff; }
    .page { display: grid; grid-template-columns: 1fr 1fr; gap: 27px; padding: 12px 4px 0 9px; }
    figure { margin: 0; min-width: 0; }
    figcaption { padding: 14px 14px 0 0; text-align: center; font: 28px/34px "Liberation Serif", serif; color: #111; }
  `;

  render() {
    return html`<main class="page">
      <figure><caleydo-window mode="overview"></caleydo-window><figcaption>(a)</figcaption></figure>
      <figure><caleydo-window mode="detail"></caleydo-window><figcaption>(b)</figcaption></figure>
    </main>`;
  }
}
